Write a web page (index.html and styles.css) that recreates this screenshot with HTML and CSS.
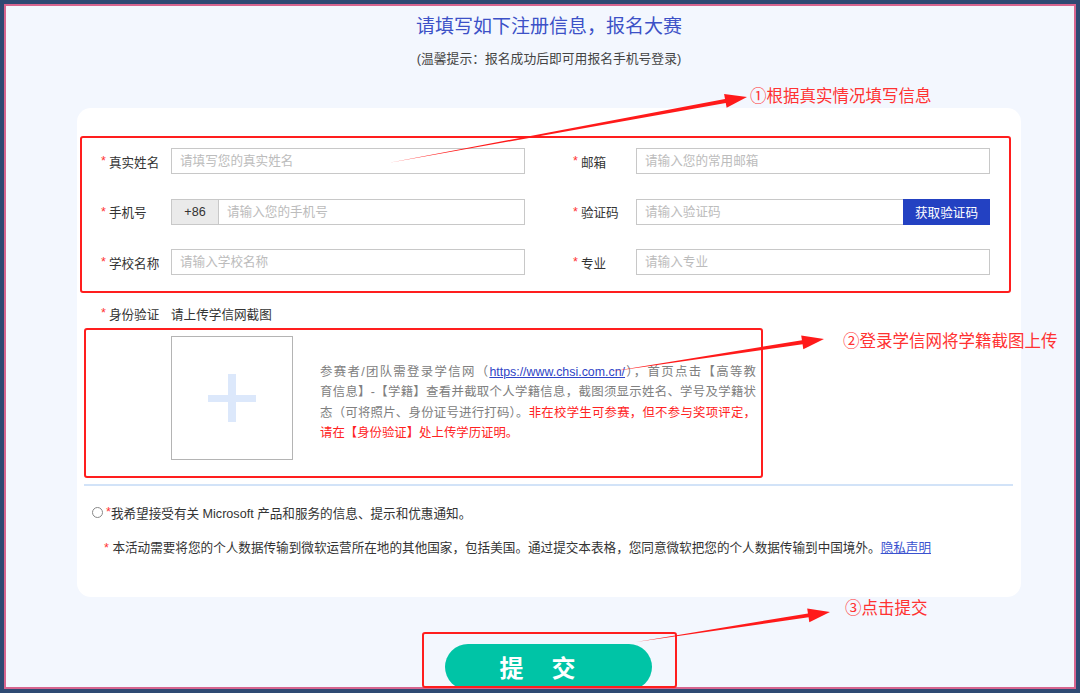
FILE: index.html
```html
<!DOCTYPE html>
<html lang="zh-CN">
<head>
<meta charset="utf-8">
<title>报名大赛</title>
<link rel="stylesheet" href="styles.css">
</head>
<body>
<div class="page">
  <div class="content">
    <h1 class="title">请填写如下注册信息，报名大赛</h1>
    <p class="subtitle">(温馨提示：报名成功后即可用报名手机号登录)</p>

    <div class="card">
      <div class="form-grid">
        <div class="field">
          <label class="lbl lbl-l"><span class="req">*</span>真实姓名</label>
          <div class="box"><input class="inp" placeholder="请填写您的真实姓名"></div>
        </div>
        <div class="field">
          <label class="lbl lbl-r"><span class="req">*</span>邮箱</label>
          <div class="box"><input class="inp" placeholder="请输入您的常用邮箱"></div>
        </div>
        <div class="field">
          <label class="lbl lbl-l"><span class="req">*</span>手机号</label>
          <div class="box"><span class="prefix">+86</span><input class="inp" placeholder="请输入您的手机号"></div>
        </div>
        <div class="field">
          <label class="lbl lbl-r"><span class="req">*</span>验证码</label>
          <div class="box"><input class="inp" placeholder="请输入验证码"><button class="code-btn">获取验证码</button></div>
        </div>
        <div class="field">
          <label class="lbl lbl-l"><span class="req">*</span>学校名称</label>
          <div class="box"><input class="inp" placeholder="请输入学校名称"></div>
        </div>
        <div class="field">
          <label class="lbl lbl-r"><span class="req">*</span>专业</label>
          <div class="box"><input class="inp" placeholder="请输入专业"></div>
        </div>
      </div>

      <div class="id-row">
        <span class="lbl lbl-l"><span class="req">*</span>身份验证</span>
        <span class="id-hint">请上传学信网截图</span>
      </div>

      <div class="upload">
        <div class="upload-box"><span class="plus"></span></div>
        <p class="upload-text">
          <span class="ln">参赛者/团队需登录学信网（<a class="link" href="#">https://www.chsi.com.cn/</a>），首页点击【高等教</span>
          <span class="ln">育信息】-【学籍】查看并截取个人学籍信息，截图须显示姓名、学号及学籍状</span>
          <span class="ln">态（可将照片、身份证号进行打码）。<span class="warn">非在校学生可参赛，但不参与奖项评定，</span></span>
          <span class="ln last warn">请在【身份验证】处上传学历证明。</span>
        </p>
      </div>

      <div class="sep"></div>

      <div class="radio-row"><span class="radio"></span><span class="req">*</span>我希望接受有关 Microsoft 产品和服务的信息、提示和优惠通知。</div>
      <div class="privacy-row"><span class="req">*</span> 本活动需要将您的个人数据传输到微软运营所在地的其他国家，包括美国。通过提交本表格，您同意微软把您的个人数据传输到中国境外。<a class="plink" href="#">隐私声明</a></div>
    </div>

    <button class="submit">提交</button>
  </div>
</div>

<svg class="overlay" width="1080" height="693" viewBox="0 0 1080 693">
  <g fill="none" stroke="#ff1e1e" stroke-width="2">
    <rect x="81" y="137" width="929" height="155" rx="2"/>
    <rect x="85" y="329" width="677" height="148" rx="2"/>
    <rect x="423" y="633" width="253" height="54" rx="2"/>
  </g>
  <g fill="#ff1a1a">
    <polygon points="388,163 725.72,102.95 726.63,107.87 747,97 724.09,94.09 725.0,99.01"/>
    <polygon points="608,372 802.55,344.30 803.31,349.24 824,339 801.19,335.40 801.95,340.34"/>
    <polygon points="636,642 808.57,617.34 809.33,622.28 830,612 807.19,608.44 807.95,613.38"/>
  </g>
</svg>
<div class="note note1">①根据真实情况填写信息</div>
<div class="note note2">②登录学信网将学籍截图上传</div>
<div class="note note3">③点击提交</div>
</body>
</html>
```

FILE: styles.css
```css
html, body {
  margin: 0;
}
body {
  padding: 4px;
  height: 693px;
  box-sizing: border-box;
  background: #2e4a73;
  overflow: hidden;
  font-family: "Liberation Sans", "Noto Sans CJK SC", sans-serif;
  color: #333;
}
.page {
  height: 100%;
  box-sizing: border-box;
  border: 2px solid #d7658f;
  background: #f3f7fe;
  overflow: hidden;
}
.content {
  margin-left: 71px;
  width: 944px;
}
.title {
  margin: 7px 0 0;
  font-size: 19px;
  line-height: 28px;
  font-weight: normal;
  text-align: center;
  color: #3c51c7;
}
.subtitle {
  margin: 9px 0 0;
  font-size: 12.8px;
  line-height: 18px;
  text-align: center;
  color: #444;
}
.card {
  margin-top: 40px;
  background: #fff;
  border-radius: 14px;
  padding: 40px 0 39px;
}
.form-grid {
  display: grid;
  grid-template-columns: 424px 417px;
  column-gap: 48px;
  row-gap: 24.5px;
  padding-left: 24px;
}
.field {
  display: flex;
  align-items: center;
  height: 26px;
}
.lbl {
  display: flex;
  align-items: center;
  font-size: 12.6px;
  color: #333;
  flex: none;
}
.lbl-l { width: 70px; }
.lbl-r { width: 63px; }
.req {
  color: #f33;
  margin-right: 3px;
}
.box {
  display: flex;
  width: 354px;
  height: 26px;
  box-sizing: border-box;
  border: 1px solid #c8c8c8;
  background: #fff;
}
.inp {
  flex: 1;
  min-width: 0;
  border: none;
  outline: none;
  padding: 0 0 0 8px;
  margin: 0;
  font-family: "Liberation Sans", "Noto Sans CJK SC", sans-serif;
  font-size: 12.6px;
  color: #333;
  background: transparent;
}
.inp::placeholder {
  color: #bcbcbc;
}
.prefix {
  width: 46px;
  flex: none;
  display: flex;
  align-items: center;
  justify-content: center;
  background: #eaeaea;
  border-right: 1px solid #c8c8c8;
  font-size: 12.6px;
  color: #333;
}
.code-btn {
  flex: none;
  width: 87px;
  margin: -1px -1px -1px 0;
  border: none;
  background: #2341c2;
  color: #fff;
  font-family: "Liberation Sans", "Noto Sans CJK SC", sans-serif;
  font-size: 12.6px;
  padding: 0;
}
.id-row {
  display: flex;
  align-items: center;
  height: 20px;
  margin-top: 28px;
  padding-left: 24px;
}
.id-hint {
  font-size: 12.6px;
  color: #333;
}
.upload {
  display: flex;
  align-items: flex-start;
  margin-top: 13px;
  padding-left: 94px;
}
.upload-box {
  width: 122px;
  height: 124px;
  box-sizing: border-box;
  border: 1px solid #b4b4b4;
  display: flex;
  align-items: center;
  justify-content: center;
  flex: none;
}
.plus {
  width: 48px;
  height: 48px;
  background:
    linear-gradient(#dce8fb, #dce8fb) center / 48px 7px no-repeat,
    linear-gradient(#dce8fb, #dce8fb) center / 8px 48px no-repeat;
}
.upload-text {
  margin: 26px 0 0 27px;
  width: 436px;
  font-size: 12.4px;
  line-height: 20.3px;
  color: #808080;
}
.ln {
  display: block;
  white-space: nowrap;
  text-align: justify;
  text-align-last: justify;
}
.ln.last {
  text-align-last: left;
}
.link {
  color: #2f44c6;
  text-decoration: underline;
}
.warn {
  color: #f22;
}
.sep {
  margin: 24px 0 0 7px;
  width: 929px;
  height: 2px;
  background: #d2e3f8;
}
.radio-row {
  display: flex;
  align-items: center;
  margin-top: 16px;
  padding-left: 15px;
  height: 20px;
  font-size: 12.6px;
  color: #333;
}
.radio {
  width: 9px;
  height: 9px;
  border: 1px solid #888;
  border-radius: 50%;
  margin-right: 3px;
}
.radio-row .req {
  margin-right: 0;
}
.privacy-row {
  margin-top: 16px;
  padding-left: 27px;
  height: 20px;
  line-height: 20px;
  font-size: 12.6px;
  color: #333;
}
.privacy-row .req {
  margin-right: 0;
}
.plink {
  color: #3a52cf;
  text-decoration: underline;
}
.submit {
  display: block;
  margin: 47px 0 0 368px;
  width: 207px;
  height: 46px;
  border: none;
  border-radius: 23px;
  background: #00c4a6;
  color: #fff;
  font-family: "Noto Sans CJK SC", sans-serif;
  font-size: 24px;
  font-weight: bold;
  letter-spacing: 28px;
  padding: 0 0 0 6px;
  line-height: 46px;
}
.overlay {
  position: absolute;
  left: 0;
  top: 0;
  pointer-events: none;
}
.note {
  position: absolute;
  font-family: "Noto Sans CJK SC", sans-serif;
  font-size: 16.5px;
  line-height: 22px;
  color: #ff3232;
  white-space: nowrap;
}
.note1 { left: 750px; top: 84px; }
.note2 { left: 843px; top: 329px; }
.note3 { left: 845px; top: 596px; }
```
